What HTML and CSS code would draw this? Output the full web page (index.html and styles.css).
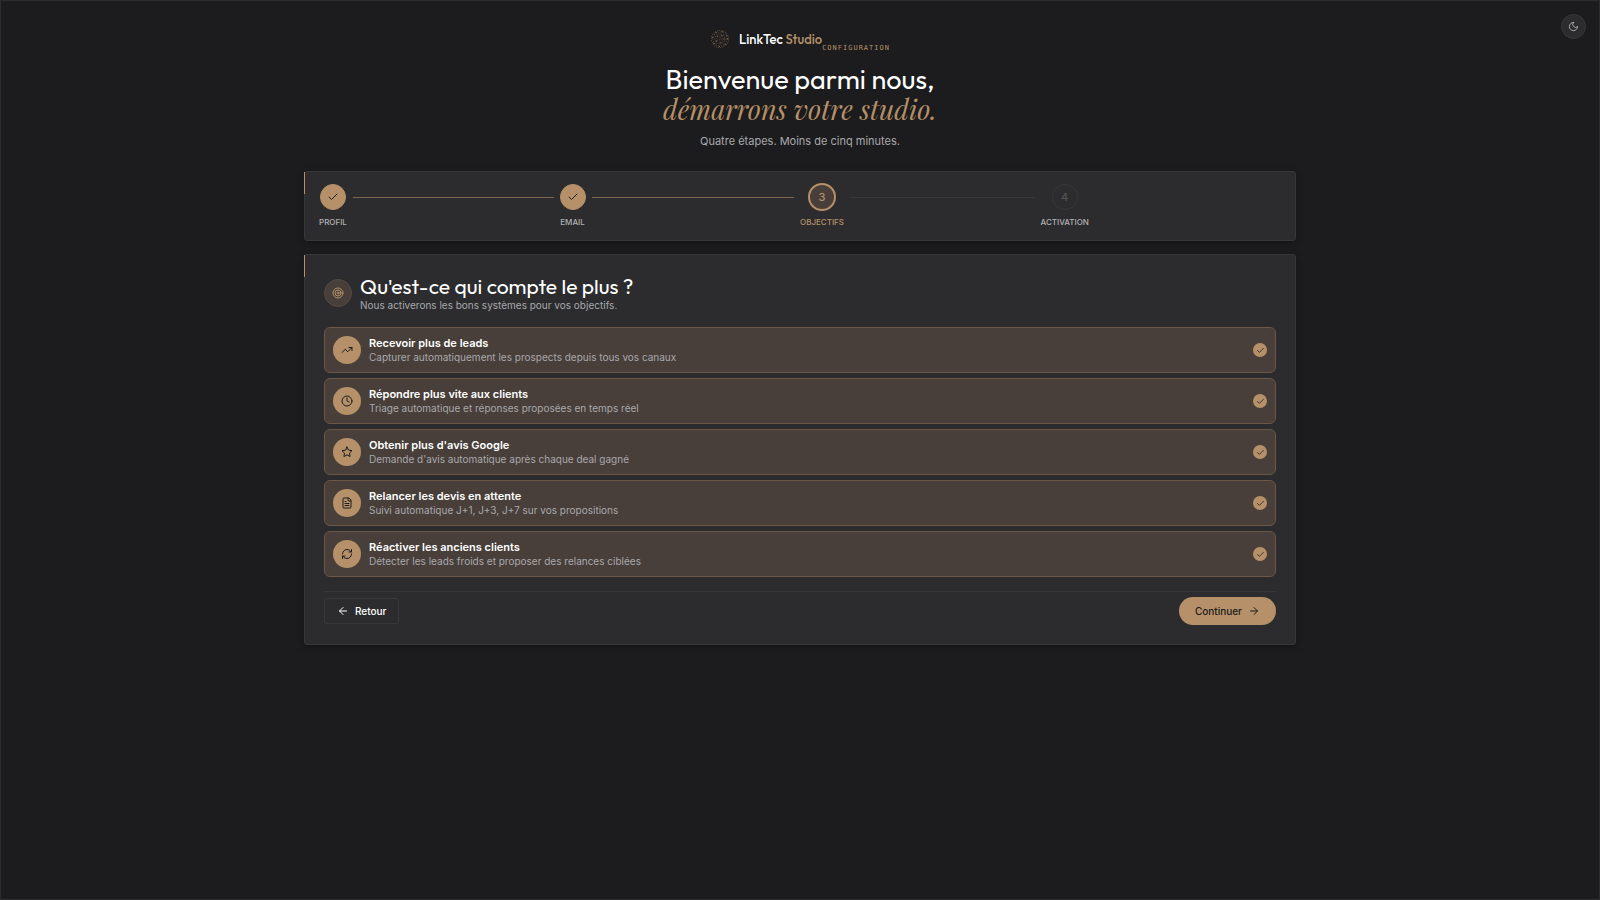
FILE: index.html
```html
<!DOCTYPE html>
<html lang="fr">

<head>
  <meta charset="UTF-8">
  <meta name="viewport" content="width=device-width, initial-scale=1.0">
  <title>LinkTec Studio - Configuration</title>
  <link rel="stylesheet" href="styles.css">
</head>

<body>
  <button class="theme-toggle" type="button" aria-label="Changer de thème">
    <svg class="icon" viewBox="0 0 24 24"><path d="M12 3a6 6 0 0 0 9 9 9 9 0 1 1-9-9Z"/></svg>
  </button>

  <div class="container">
    <header class="header">
      <div class="brand">
        <svg class="brand-logo" viewBox="0 0 20 20">
          <circle cx="10" cy="10" r="1" stroke-dasharray="0 2.1"/>
          <circle cx="10" cy="10" r="3" stroke-dasharray="0 2.3"/>
          <circle cx="10" cy="10" r="5" stroke-dasharray="0 2.2"/>
          <circle cx="10" cy="10" r="7" stroke-dasharray="0 2.4"/>
          <circle cx="10" cy="10" r="8.6" stroke-dasharray="0 2.1"/>
          <circle class="bright" cx="10" cy="10" r="4" stroke-dasharray="0 5.1"/>
          <circle class="bright" cx="10" cy="10" r="7.6" stroke-dasharray="0 6.3"/>
        </svg>
        <span class="brand-name">LinkTec <span class="gold">Studio</span></span>
        <span class="brand-tag">CONFIGURATION</span>
      </div>
      <h1>Bienvenue parmi nous,<em>démarrons votre studio.</em></h1>
      <p>Quatre étapes. Moins de cinq minutes.</p>
    </header>

    <!-- Steps -->
    <ol class="card steps">
      <li class="step done">
        <div class="step-info">
          <span class="step-circle"><svg class="icon" viewBox="0 0 24 24"><path d="M20 6 9 17l-5-5"/></svg></span>
          <span class="step-label">PROFIL</span>
        </div>
        <span class="step-line"></span>
      </li>
      <li class="step done">
        <div class="step-info">
          <span class="step-circle"><svg class="icon" viewBox="0 0 24 24"><path d="M20 6 9 17l-5-5"/></svg></span>
          <span class="step-label">EMAIL</span>
        </div>
        <span class="step-line"></span>
      </li>
      <li class="step current" aria-current="step">
        <div class="step-info">
          <span class="step-circle">3</span>
          <span class="step-label">OBJECTIFS</span>
        </div>
        <span class="step-line"></span>
      </li>
      <li class="step">
        <div class="step-info">
          <span class="step-circle">4</span>
          <span class="step-label">ACTIVATION</span>
        </div>
      </li>
    </ol>

    <!-- Goals -->
    <form class="card goals">
      <div class="goals-header">
        <span class="goals-icon">
          <svg class="icon" viewBox="0 0 24 24"><circle cx="12" cy="12" r="10"/><circle cx="12" cy="12" r="6"/><circle cx="12" cy="12" r="2"/></svg>
        </span>
        <div>
          <h2>Qu'est-ce qui compte le plus ?</h2>
          <p>Nous activerons les bons systèmes pour vos objectifs.</p>
        </div>
      </div>

      <div class="goal-list">
        <label class="goal">
          <span class="goal-icon"><svg class="icon" viewBox="0 0 24 24"><path d="m22 7-8.5 8.5-5-5L2 17"/><path d="M16 7h6v6"/></svg></span>
          <span class="goal-text">
            <span class="goal-title">Recevoir plus de leads</span>
            <span class="goal-desc">Capturer automatiquement les prospects depuis tous vos canaux</span>
          </span>
          <span class="goal-check"><input type="checkbox" checked><svg class="icon" viewBox="0 0 24 24"><path d="M20 6 9 17l-5-5"/></svg></span>
        </label>
        <label class="goal">
          <span class="goal-icon"><svg class="icon" viewBox="0 0 24 24"><circle cx="12" cy="12" r="10"/><path d="M12 6v6l4 2"/></svg></span>
          <span class="goal-text">
            <span class="goal-title">Répondre plus vite aux clients</span>
            <span class="goal-desc">Triage automatique et réponses proposées en temps réel</span>
          </span>
          <span class="goal-check"><input type="checkbox" checked><svg class="icon" viewBox="0 0 24 24"><path d="M20 6 9 17l-5-5"/></svg></span>
        </label>
        <label class="goal">
          <span class="goal-icon"><svg class="icon" viewBox="0 0 24 24"><path d="m12 2 3.1 6.3 6.9 1-5 4.8 1.2 6.9-6.2-3.2L5.8 21 7 14.1 2 9.3l6.9-1Z"/></svg></span>
          <span class="goal-text">
            <span class="goal-title">Obtenir plus d'avis Google</span>
            <span class="goal-desc">Demande d'avis automatique après chaque deal gagné</span>
          </span>
          <span class="goal-check"><input type="checkbox" checked><svg class="icon" viewBox="0 0 24 24"><path d="M20 6 9 17l-5-5"/></svg></span>
        </label>
        <label class="goal">
          <span class="goal-icon"><svg class="icon" viewBox="0 0 24 24"><path d="M15 2H6a2 2 0 0 0-2 2v16a2 2 0 0 0 2 2h12a2 2 0 0 0 2-2V7Z"/><path d="M14 2v4a2 2 0 0 0 2 2h4M10 9H8M16 13H8M16 17H8"/></svg></span>
          <span class="goal-text">
            <span class="goal-title">Relancer les devis en attente</span>
            <span class="goal-desc">Suivi automatique J+1, J+3, J+7 sur vos propositions</span>
          </span>
          <span class="goal-check"><input type="checkbox" checked><svg class="icon" viewBox="0 0 24 24"><path d="M20 6 9 17l-5-5"/></svg></span>
        </label>
        <label class="goal">
          <span class="goal-icon"><svg class="icon" viewBox="0 0 24 24"><path d="M3 12a9 9 0 0 1 9-9 9.75 9.75 0 0 1 6.74 2.74L21 8"/><path d="M21 3v5h-5"/><path d="M21 12a9 9 0 0 1-9 9 9.75 9.75 0 0 1-6.74-2.74L3 16"/><path d="M8 16H3v5"/></svg></span>
          <span class="goal-text">
            <span class="goal-title">Réactiver les anciens clients</span>
            <span class="goal-desc">Détecter les leads froids et proposer des relances ciblées</span>
          </span>
          <span class="goal-check"><input type="checkbox" checked><svg class="icon" viewBox="0 0 24 24"><path d="M20 6 9 17l-5-5"/></svg></span>
        </label>
      </div>

      <div class="actions">
        <button class="btn btn-back" type="button">
          <svg class="icon" viewBox="0 0 24 24"><path d="m12 19-7-7 7-7M19 12H5"/></svg>
          Retour
        </button>
        <button class="btn btn-next" type="submit">
          Continuer
          <svg class="icon" viewBox="0 0 24 24"><path d="M5 12h14M12 5l7 7-7 7"/></svg>
        </button>
      </div>
    </form>
  </div>
</body>

</html>
```

FILE: styles.css
```css
* {
  box-sizing: border-box;
}

body {
  font-family: Inter, sans-serif;
  margin: 0;
  min-height: 100vh;
  padding: 24px 20px;
  background-color: #1c1c1e;
  border: 1px solid #2c2c2e;
  color: #fff;
}

h1,
h2,
p {
  margin: 0;
}

.icon {
  display: block;
  width: 12px;
  height: 12px;
  fill: none;
  stroke: currentColor;
  stroke-width: 2;
  stroke-linecap: round;
  stroke-linejoin: round;
}

.gold {
  color: #b59068;
}

.theme-toggle {
  position: absolute;
  top: 14px;
  right: 14px;
  width: 25px;
  height: 25px;
  padding: 0;
  display: grid;
  place-items: center;
  border: 1px solid #38383a;
  border-radius: 50%;
  background-color: #2c2c2e;
  color: #b4b4b8;
}

.theme-toggle .icon {
  width: 11px;
  height: 11px;
}

.container {
  max-width: 992px;
  margin: 0 auto;
}

/* Header */
.header {
  text-align: center;
  margin-bottom: 22px;
}

.brand {
  display: flex;
  justify-content: center;
  align-items: center;
  height: 27px;
  margin-bottom: 12px;
}

.brand-logo {
  width: 20px;
  height: 20px;
  margin-right: 9px;
  fill: none;
  stroke: #6b5541;
  stroke-width: 1;
  stroke-linecap: round;
}

.brand-logo .bright {
  stroke: #b59068;
}

.brand-name {
  font-family: Outfit, Lato, sans-serif;
  font-size: 13px;
  font-weight: 500;
}

.brand-tag {
  align-self: flex-end;
  font-family: "DejaVu Sans Mono", monospace;
  font-size: 7px;
  line-height: 8px;
  letter-spacing: 1px;
  color: #b59068;
}

h1 {
  font-family: Outfit, Lato, sans-serif;
  font-size: 27px;
  font-weight: 400;
  line-height: 30px;
}

h1 em {
  display: block;
  font-family: "Playfair Display", "Liberation Serif", serif;
  color: #b59068;
}

.header p {
  margin-top: 9px;
  font-size: 11px;
  line-height: 16px;
  color: #a8a8ac;
}

/* Cards */
.card {
  position: relative;
  margin: 0 0 13px;
  background-color: #2c2c2e;
  border: 1px solid #363638;
  border-radius: 3px;
  box-shadow: 0 2px 6px rgba(0, 0, 0, 0.3);
}

.card::before {
  content: "";
  position: absolute;
  top: 0;
  left: -1px;
  width: 1px;
  height: 22px;
  background-color: #b59068;
}

/* Steps */
.steps {
  display: grid;
  grid-template-columns: repeat(4, 1fr);
  padding: 11px 14px 12px;
  list-style: none;
}

.step {
  display: flex;
}

.step-info {
  display: flex;
  flex-direction: column;
  align-items: center;
}

.step-circle {
  display: grid;
  place-items: center;
  width: 26px;
  height: 26px;
  margin: 1px 0;
  border: 1px solid #38383a;
  border-radius: 50%;
  font-size: 11px;
  font-weight: 500;
  color: #545457;
}

.step-label {
  margin-top: 5px;
  font-size: 8px;
  font-weight: 500;
  line-height: 12px;
  color: #b0b0b4;
}

.step-line {
  flex: 1;
  height: 1px;
  margin: 14px 6px 0;
  background-color: #38383a;
}

.done .step-circle {
  background-color: #b59068;
  border-color: #b59068;
  color: #1c1c1e;
}

.done .step-line {
  background-color: #7d6650;
}

.current .step-circle {
  width: 28px;
  height: 28px;
  margin: 0;
  background-color: #483f3a;
  border: 2px solid #b59068;
  color: #b59068;
}

.current .step-label {
  color: #b59068;
}

/* Goals */
.goals {
  padding: 19px;
}

.goals-header {
  display: flex;
  align-items: center;
  gap: 8px;
  margin-bottom: 15px;
}

.goals-icon {
  display: grid;
  place-items: center;
  width: 28px;
  height: 28px;
  border: 1px solid #544a41;
  border-radius: 50%;
  background-color: #483f3a;
  color: #b59068;
}

h2 {
  font-family: Outfit, Lato, sans-serif;
  font-size: 21px;
  font-weight: 400;
  line-height: 24px;
}

.goals-header p {
  font-size: 10px;
  line-height: 14px;
  color: #a8a8ac;
}

.goal-list {
  display: flex;
  flex-direction: column;
  gap: 5px;
}

.goal {
  display: flex;
  align-items: center;
  gap: 8px;
  padding: 8px;
  border: 1px solid #6b5745;
  border-radius: 6px;
  background-color: #483f3a;
}

.goal-icon {
  display: grid;
  place-items: center;
  width: 28px;
  height: 28px;
  border-radius: 50%;
  background-color: #b59068;
  color: #1c1c1e;
}

.goal-text {
  display: flex;
  flex: 1;
  flex-direction: column;
}

.goal-title {
  font-size: 11px;
  font-weight: 600;
  line-height: 14px;
}

.goal-desc {
  font-size: 10px;
  line-height: 14px;
  color: #a8a8ac;
}

.goal-check {
  display: grid;
  place-items: center;
}

.goal-check input,
.goal-check .icon {
  grid-area: 1 / 1;
}

.goal-check input {
  appearance: none;
  width: 14px;
  height: 14px;
  margin: 0;
  border-radius: 50%;
  background-color: #b59068;
}

.goal-check .icon {
  z-index: 1;
  width: 9px;
  height: 9px;
  color: #1c1c1e;
  pointer-events: none;
}

/* Buttons */
.actions {
  display: flex;
  justify-content: space-between;
  align-items: center;
  margin-top: 14px;
  padding-top: 5px;
  border-top: 1px solid #38383a;
}

.btn {
  display: flex;
  align-items: center;
  gap: 6px;
  font-family: inherit;
  font-size: 10px;
}

.btn-back {
  height: 26px;
  padding: 0 12px;
  border: 1px solid #38383a;
  border-radius: 3px;
  background-color: transparent;
  color: #fff;
  font-weight: 500;
}

.btn-next {
  height: 28px;
  padding: 0 16px;
  border: 0;
  border-radius: 14px;
  background-color: #b59068;
  color: #1c1c1e;
  font-weight: 500;
}
```
